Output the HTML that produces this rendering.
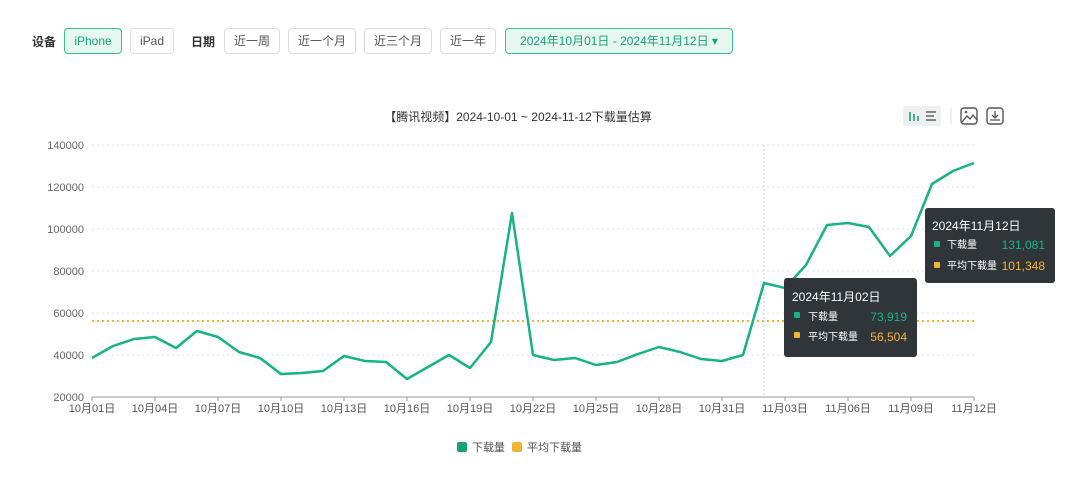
<!DOCTYPE html><html><head><meta charset="utf-8"><style>
body{margin:0;width:1080px;height:477px;background:#fff;font-family:"Liberation Sans","Noto Sans CJK SC",sans-serif;position:relative;overflow:hidden}
.b{position:absolute;top:28px;height:24px;border:1px solid #ddd;border-radius:4px;font-size:12px;color:#555;line-height:24px;text-align:center;box-sizing:content-box}
.g{border-color:#3cbf8f;background:#e6f7f0;color:#18a37a}
.l{position:absolute;top:33px;font-size:12px;font-weight:bold;color:#333}
</style></head><body>
<div class="l" style="left:32px">设备</div>
<div class="b g" style="left:64px;width:56px">iPhone</div>
<div class="b" style="left:130px;width:42px">iPad</div>
<div class="l" style="left:191px">日期</div>
<div class="b" style="left:224px;width:54px">近一周</div>
<div class="b" style="left:288px;width:66px">近一个月</div>
<div class="b" style="left:364px;width:66px">近三个月</div>
<div class="b" style="left:440px;width:54px">近一年</div>
<div class="b g" style="left:505px;width:226px">2024年10月01日 - 2024年11月12日 ▾</div>
<svg width="1080" height="477" style="position:absolute;left:0;top:0" font-family="Liberation Sans,Noto Sans CJK SC,sans-serif">
<text x="518" y="121" font-size="12" fill="#333" text-anchor="middle">【腾讯视频】2024-10-01 ~ 2024-11-12下载量估算</text>
<rect x="903" y="106" width="38" height="20" fill="#eef0f0" rx="2"/>
<path d="M910 112v9M914 114v7M918 116v5" stroke="#18a37a" stroke-width="1.6"/>
<path d="M926 112h10M926 116h8M926 120h10" stroke="#666" stroke-width="1.4"/>
<line x1="951" y1="108" x2="951" y2="124" stroke="#ddd"/>
<rect x="961" y="108" width="16" height="16" rx="3" fill="none" stroke="#555" stroke-width="1.4"/>
<path d="M962 122l5-6 3 3 3-4 4 5" fill="none" stroke="#555" stroke-width="1.3"/><circle cx="966" cy="112" r="1.3" fill="#555"/>
<rect x="987" y="108" width="16" height="16" rx="3" fill="none" stroke="#555" stroke-width="1.4"/>
<path d="M995 111v7M992 115l3 3 3-3M990 120h10" fill="none" stroke="#555" stroke-width="1.3"/>
<g stroke="#e6e6e6" stroke-dasharray="2,3">
<line x1="92" x2="974" y1="145" y2="145"/><line x1="92" x2="974" y1="187" y2="187"/><line x1="92" x2="974" y1="229" y2="229"/><line x1="92" x2="974" y1="271" y2="271"/><line x1="92" x2="974" y1="313" y2="313"/><line x1="92" x2="974" y1="355" y2="355"/></g>
<line x1="92" x2="974" y1="397" y2="397" stroke="#999"/>
<g font-size="11" fill="#666" text-anchor="end">
<text x="84" y="149">140000</text><text x="84" y="191">120000</text><text x="84" y="233">100000</text><text x="84" y="275">80000</text><text x="84" y="317">60000</text><text x="84" y="359">40000</text><text x="84" y="401">20000</text></g>
<g font-size="11" fill="#555" text-anchor="middle" stroke="#999">
<line x1="92" x2="92" y1="397" y2="401"/><line x1="155" x2="155" y1="397" y2="401"/><line x1="218" x2="218" y1="397" y2="401"/><line x1="281" x2="281" y1="397" y2="401"/><line x1="344" x2="344" y1="397" y2="401"/><line x1="407" x2="407" y1="397" y2="401"/><line x1="470" x2="470" y1="397" y2="401"/><line x1="533" x2="533" y1="397" y2="401"/><line x1="596" x2="596" y1="397" y2="401"/><line x1="659" x2="659" y1="397" y2="401"/><line x1="722" x2="722" y1="397" y2="401"/><line x1="785" x2="785" y1="397" y2="401"/><line x1="848" x2="848" y1="397" y2="401"/><line x1="911" x2="911" y1="397" y2="401"/><line x1="974" x2="974" y1="397" y2="401"/>
<g stroke="none">
<text x="92" y="412">10月01日</text><text x="155" y="412">10月04日</text><text x="218" y="412">10月07日</text><text x="281" y="412">10月10日</text><text x="344" y="412">10月13日</text><text x="407" y="412">10月16日</text><text x="470" y="412">10月19日</text><text x="533" y="412">10月22日</text><text x="596" y="412">10月25日</text><text x="659" y="412">10月28日</text><text x="722" y="412">10月31日</text><text x="785" y="412">11月03日</text><text x="848" y="412">11月06日</text><text x="911" y="412">11月09日</text><text x="974" y="412">11月12日</text></g></g>
<line x1="764" x2="764" y1="145" y2="397" stroke="#ccc" stroke-dasharray="2,2"/>
<line x1="92" x2="974" y1="321" y2="321" stroke="#f5b335" stroke-width="2" stroke-dasharray="2,3"/>
<polyline fill="none" stroke="#16b384" stroke-width="2.5" stroke-linejoin="round" points="92,358 113,346 134,339 155,337 176,348 197,331 218,337 239,352 260,358 281,374 302,373 323,371 344,356 365,361 386,362 407,379 428,367 449,355 470,368 491,342 512,213 533,355 554,360 575,358 596,365 617,362 638,354 659,347 680,352 701,359 722,361 743,355 764,283 785,288 806,265 827,225 848,223 869,227 890,256 911,236 932,184 953,171 974,163"/>
<rect x="784" y="278" width="133" height="79" rx="3" fill="#30353a"/>
<text x="792" y="301" font-size="12" fill="#fff">2024年11月02日</text>
<rect x="794" y="312" width="6" height="6" rx="1" fill="#16b384"/><text x="808" y="320" font-size="10" fill="#fff">下载量</text><text x="907" y="321" font-size="12" fill="#16b384" text-anchor="end">73,919</text>
<rect x="794" y="332" width="6" height="6" rx="1" fill="#f5b335"/><text x="808" y="340" font-size="10" fill="#fff">平均下载量</text><text x="907" y="341" font-size="12" fill="#f5b335" text-anchor="end">56,504</text>
<rect x="925" y="208" width="130" height="75" rx="3" fill="#30353a"/>
<text x="932" y="230" font-size="12" fill="#fff">2024年11月12日</text>
<rect x="934" y="241" width="6" height="6" rx="1" fill="#16b384"/><text x="947" y="248" font-size="10" fill="#fff">下载量</text><text x="1045" y="249" font-size="12" fill="#16b384" text-anchor="end">131,081</text>
<rect x="934" y="262" width="6" height="6" rx="1" fill="#f5b335"/><text x="947" y="269" font-size="10" fill="#fff">平均下载量</text><text x="1045" y="270" font-size="12" fill="#f5b335" text-anchor="end">101,348</text>
<rect x="457" y="442" width="10" height="10" rx="2" fill="#16a37a"/><text x="472" y="451" font-size="11" fill="#555">下载量</text>
<rect x="512" y="442" width="10" height="10" rx="2" fill="#f5b335"/><text x="527" y="451" font-size="11" fill="#555">平均下载量</text>
</svg>
</body></html>
